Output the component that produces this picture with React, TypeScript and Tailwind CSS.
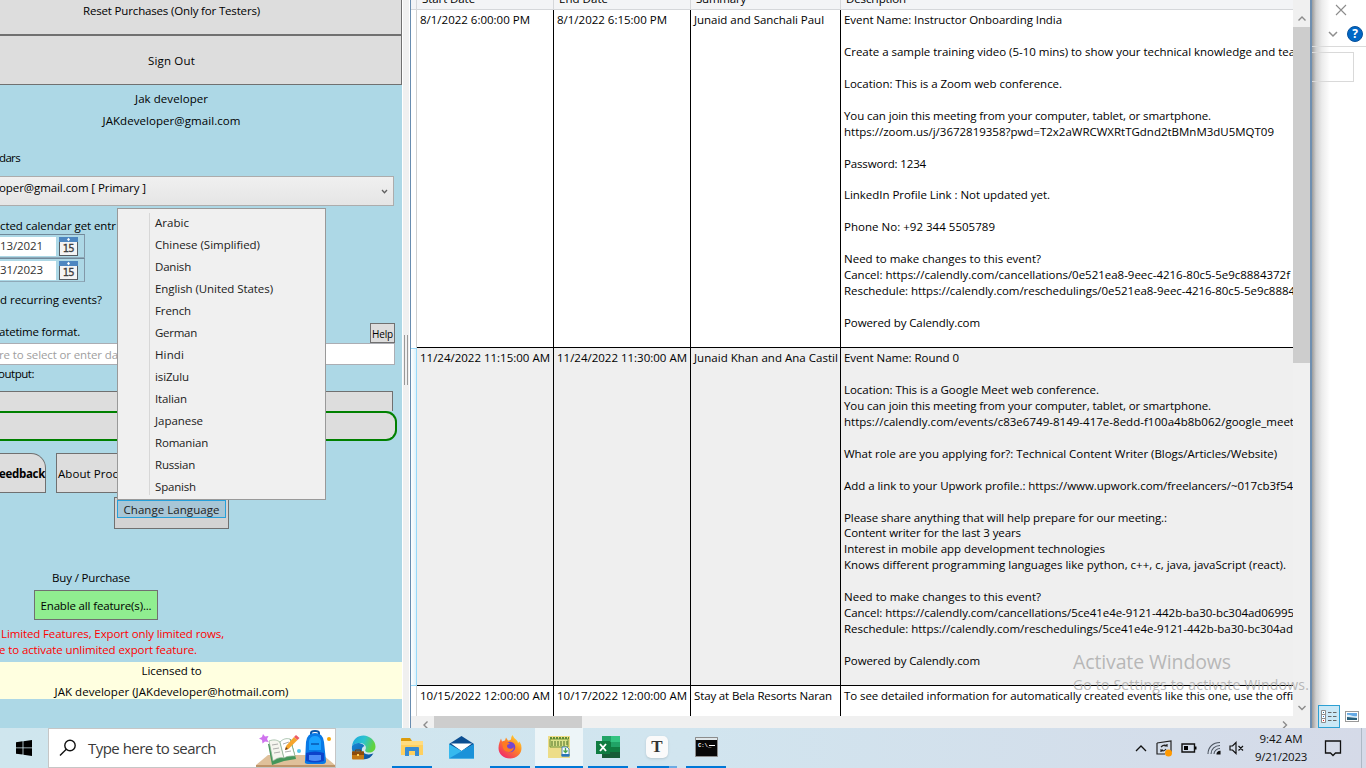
import React, { useLayoutEffect, useRef, useState } from "react";

/* Text tracked so that it spans a given width. */
function Fit({ w, children, className = "" }: { w: number; children: string; className?: string }) {
  const ref = useRef<HTMLSpanElement>(null);
  const [ls, setLs] = useState(0);
  useLayoutEffect(() => {
    if (ref.current) {
      const natural = ref.current.getBoundingClientRect().width;
      setLs((w - natural) / children.length);
    }
  }, []);
  return (
    <span ref={ref} className={`inline-block shrink-0 whitespace-pre ${className}`} style={{ letterSpacing: `${ls}px` }}>
      {children}
    </span>
  );
}

type Line = [string, number] | null;

const eventOne: Line[] = [
  ["Event Name: Instructor Onboarding India", 218],
  null,
  ["Create a sample training video (5-10 mins) to show your technical knowledge and tea", 451],
  null,
  ["Location: This is a Zoom web conference.", 218],
  null,
  ["You can join this meeting from your computer, tablet, or smartphone.", 367],
  ["https://zoom.us/j/3672819358?pwd=T2x2aWRCWXRtTGdnd2tBMnM3dU5MQT09", 430],
  null,
  ["Password: 1234", 82],
  null,
  ["LinkedIn Profile Link : Not updated yet.", 206],
  null,
  ["Phone No: +92 344 5505789", 151],
  null,
  ["Need to make changes to this event?", 197],
  ["Cancel: https://calendly.com/cancellations/0e521ea8-9eec-4216-80c5-5e9c8884372f", 446],
  ["Reschedule: https://calendly.com/reschedulings/0e521ea8-9eec-4216-80c5-5e9c8884", 451],
  null,
  ["Powered by Calendly.com", 136],
];

const eventTwo: Line[] = [
  ["Event Name: Round 0", 115],
  null,
  ["Location: This is a Google Meet web conference.", 255],
  ["You can join this meeting from your computer, tablet, or smartphone.", 367],
  ["https://calendly.com/events/c83e6749-8149-417e-8edd-f100a4b8b062/google_meet", 450],
  null,
  ["What role are you applying for?: Technical Content Writer (Blogs/Articles/Website)", 433],
  null,
  ["Add a link to your Upwork profile.: https://www.upwork.com/freelancers/~017cb3f54", 449],
  null,
  ["Please share anything that will help prepare for our meeting.:", 323],
  ["Content writer for the last 3 years", 177],
  ["Interest in mobile app development technologies", 261],
  ["Knows different programming languages like python, c++, c, java, javaScript (react).", 442],
  null,
  ["Need to make changes to this event?", 197],
  ["Cancel: https://calendly.com/cancellations/5ce41e4e-9121-442b-ba30-bc304ad06995", 450],
  ["Reschedule: https://calendly.com/reschedulings/5ce41e4e-9121-442b-ba30-bc304ad", 449],
  null,
  ["Powered by Calendly.com", 136],
];

const eventThree: Line[] = [
  ["To see detailed information for automatically created events like this one, use the offi", 449],
];

const languages: [string, number][] = [
  ["Arabic", 34], ["Chinese (Simplified)", 105], ["Danish", 36], ["English (United States)", 118],
  ["French", 36], ["German", 42], ["Hindi", 29], ["isiZulu", 34], ["Italian", 32],
  ["Japanese", 48], ["Romanian", 53], ["Russian", 40], ["Spanish", 41],
];

function GridRow({ start, end, summary, lines, selected = false, height }: {
  start: [string, number]; end: [string, number]; summary: [string, number]; lines: Line[]; selected?: boolean; height: string;
}) {
  return (
    <div className={`flex shrink-0 overflow-hidden ${height}`}>
      <div className={`w-[6px] shrink-0 border-r ${selected ? "border-[#99d9f9] border-y bg-gradient-to-r from-white to-[#dff2fb]" : "border-[#d0d0d0] bg-white"}`} />
      <div className={`flex min-w-0 grow border-b border-black leading-[15.96px] ${selected ? "bg-[#efefef]" : "bg-white"}`}>
        <div className="w-[137px] shrink-0 border-r border-black pl-[3px] pt-[2px]"><Fit w={start[1]}>{start[0]}</Fit></div>
        <div className="w-[137px] shrink-0 border-r border-black pl-[3px] pt-[2px]"><Fit w={end[1]}>{end[0]}</Fit></div>
        <div className="w-[150px] shrink-0 overflow-hidden border-r border-black pl-[3px] pt-[2px]"><Fit w={summary[1]}>{summary[0]}</Fit></div>
        <div className="min-w-0 grow overflow-hidden pl-[3px] pt-[2px]">
          {lines.map((l, i) => (
            <div key={i} className="flex h-[15.96px]">{l && <Fit w={l[1]}>{l[0]}</Fit>}</div>
          ))}
        </div>
      </div>
    </div>
  );
}

function Chevron({ d, className = "" }: { d: string; className?: string }) {
  return (
    <svg className={className} width="10" height="10" viewBox="0 0 10 10" fill="none" stroke="#8b8b8b" strokeWidth="1.4"><path d={d} /></svg>
  );
}

function DateRow({ text }: { text: string }) {
  return (
    <div className="flex h-[24px] w-[85px] items-start border-y border-r border-[#8fa9b8] border-t-[#71899a] border-r-[#8298a8] pt-[2px]">
      <div className="flex h-[19px] w-[56px] items-center bg-white pb-px text-[#333]"><Fit w={43}>{text}</Fit></div>
      <svg className="ml-[3px]" width="19" height="19" viewBox="0 0 19 19">
        <rect x=".5" y=".5" width="18" height="18" fill="#f4f4f4" stroke="#555b61" />
        <rect x="0" y="0" width="19" height="5" fill="#4d86c0" />
        <path d="M9.5 .8l1.5 1.7-1.5 1.7L8 2.500z" fill="#fff" />
        <text x="9.700" y="15" textAnchor="middle" fontSize="10" fontFamily="DejaVu Sans" fill="#404040" stroke="#404040" strokeWidth=".3" textLength="12">15</text>
      </svg>
    </div>
  );
}

function Sidebar() {
  return (
    <aside className="flex w-[402px] shrink-0 flex-col overflow-hidden bg-[#add8e6]">
      <div className="flex h-[35px] shrink-0 justify-center border-b border-r border-[#707070] bg-[#ddd] pr-[58px] pt-[3px]"><Fit w={177}>Reset Purchases (Only for Testers)</Fit></div>
      <div className="flex h-[50px] shrink-0 items-center justify-center border border-l-0 border-[#707070] bg-[#ddd] pr-[58px] pt-px"><Fit w={47}>Sign Out</Fit></div>
      <div className="flex h-[28px] shrink-0 items-center justify-center pr-[59px]"><Fit w={73}>Jak developer</Fit></div>
      <div className="flex h-[16px] shrink-0 items-center justify-center pr-[59px]"><Fit w={138}>JAKdeveloper@gmail.com</Fit></div>
      <div className="mt-[21px] flex h-[16px] shrink-0 items-center"><Fit w={21} className="-ml-px">dars</Fit></div>
      <div className="mt-[10px] flex h-[30px] w-[394px] shrink-0 items-center justify-between border border-l-0 border-[#acacac] bg-gradient-to-b from-[#f0f0f0] to-[#e5e5e5] pb-[6px] pr-[4px]">
        <Fit w={147} className="-ml-px">oper@gmail.com [ Primary ]</Fit>
        <svg className="mt-[6px]" width="9" height="9" viewBox="0 0 9 9" fill="none" stroke="#606060" strokeWidth="1.300"><path d="M2 3l2.500 2.700L7 3" /></svg>
      </div>
      <div className="mt-[12px] flex h-[16px] shrink-0 items-center"><Fit w={116}>cted calendar get entr</Fit></div>
      <div className="flex h-[48px] shrink-0 flex-col"><DateRow text="13/2021" /><DateRow text="31/2023" /></div>
      <div className="mt-[10px] flex h-[16px] shrink-0 items-center"><Fit w={102}>d recurring events?</Fit></div>
      <div className="mt-[15px] flex h-[20px] w-[395px] shrink-0 justify-between">
        <Fit w={81} className="-ml-px pt-px">atetime format.</Fit>
        <div className="flex w-[25px] items-center justify-center border border-[#707070] bg-[#ddd] pt-px text-[10px]"><Fit w={21}>Help</Fit></div>
      </div>
      <div className="flex h-[22px] w-[395px] shrink-0 items-center border border-l-0 border-[#abadb3] bg-white pt-px text-[#a0a0a0]"><Fit w={119} className="-ml-px">re to select or enter da</Fit></div>
      <div className="mt-[1px] flex h-[16px] shrink-0 items-center"><Fit w={36} className="-ml-[2px]">output:</Fit></div>
      <div className="mt-[9px] h-[20px] w-[393px] shrink-0 border border-b-0 border-l-0 border-[#707070] bg-[#ddd]" />
      <div className="h-[30px] w-[397px] shrink-0 rounded-r-[11px] border-2 border-l-0 border-[#008000] bg-[#ddd]" />
      <div className="mt-[12px] flex h-[40px] shrink-0 gap-[10px]">
        <div className="flex w-[46px] items-center rounded-tr-[15px] border border-l-0 border-[#707070] bg-[#ddd] pt-[2px] font-bold"><Fit w={46} className="-ml-px">eedback</Fit></div>
        <div className="flex w-[80px] items-center border border-[#707070] bg-[#ddd] pl-px pt-[2px]"><Fit w={60}>About Proc</Fit></div>
      </div>
      <div className="ml-[114px] mt-[4px] h-[32px] w-[115px] shrink-0 border border-[#707070] bg-[#d3d3d3] px-[2px] pt-[2px]">
        <div className="flex h-[18px] items-center justify-center border border-[#26a0da] bg-[#a8c6d6] pt-[2px] text-[#212121]"><Fit w={96}>Change Language</Fit></div>
      </div>
      <div className="ml-[52px] mt-[41px] flex h-[16px] shrink-0 items-center"><Fit w={78}>Buy / Purchase</Fit></div>
      <div className="ml-[34px] mt-[4px] flex h-[30px] w-[124px] shrink-0 items-center justify-center border border-[#707070] bg-[#90ee90] pt-[2px]"><Fit w={111}>Enable all feature(s)...</Fit></div>
      <div className="mt-[6px] flex h-[16px] shrink-0 items-center pl-px text-[#f00]"><Fit w={223}>Limited Features, Export only limited rows,</Fit></div>
      <div className="flex h-[16px] shrink-0 items-center text-[#f00]"><Fit w={198} className="-ml-px">e to activate unlimited export feature.</Fit></div>
      <div className="mt-[4px] flex h-[37px] shrink-0 flex-col items-center bg-[#ffffe0] pr-[59px]">
        <div className="flex h-[18px] items-center"><Fit w={60}>Licensed to</Fit></div>
        <div className="mt-[3px] flex h-[16px] items-center pt-[2px]"><Fit w={234}>JAK developer (JAKdeveloper@hotmail.com)</Fit></div>
      </div>
    </aside>
  );
}

function DataGrid() {
  return (
    <main className="flex w-[902px] shrink-0 flex-col border-r-2 border-r-[#6f8fb0] border-l border-l-[#688caf] bg-[#f0f0f0]">
      <div className="flex h-[716px] overflow-hidden">
        <div className="flex w-[882px] shrink-0 flex-col overflow-hidden bg-white">
          <div className="flex h-[10px] shrink-0 overflow-hidden border-b border-[#d5d7da] bg-[#f3f4f6]">
            <div className="w-[6px] shrink-0 border-r border-[#d5d7da]" />
            <div className="-mt-[9px] flex h-[18px] items-center leading-[16px]">
              <div className="h-full w-[137px] border-r border-[#d5d7da] pl-[5px]"><Fit w={53}>Start Date</Fit></div>
              <div className="h-full w-[137px] border-r border-[#d5d7da] pl-[5px]"><Fit w={49}>End Date</Fit></div>
              <div className="h-full w-[150px] border-r border-[#d5d7da] pl-[5px]"><Fit w={50}>Summary</Fit></div>
              <div className="h-full pl-[5px]"><Fit w={60}>Description</Fit></div>
            </div>
          </div>
          <GridRow height="h-[338px]" start={["8/1/2022 6:00:00 PM", 110]} end={["8/1/2022 6:15:00 PM", 110]} summary={["Junaid and Sanchali Paul", 130]} lines={eventOne} />
          <GridRow selected height="h-[338px]" start={["11/24/2022 11:15:00 AM", 130]} end={["11/24/2022 11:30:00 AM", 130]} summary={["Junaid Khan and Ana Castil", 144]} lines={eventTwo} />
          <GridRow height="h-[60px]" start={["10/15/2022 12:00:00 AM", 130]} end={["10/17/2022 12:00:00 AM", 130]} summary={["Stay at Bela Resorts Naran", 138]} lines={eventThree} />
        </div>
        <div className="flex w-[17px] shrink-0 flex-col items-center bg-[#f0f0f0]">
          <Chevron className="mt-[14px] shrink-0" d="M1.500 6.500L5 3l3.500 3.500" />
          <div className="mt-[3px] h-[336px] w-full shrink-0 bg-[#cdcdcd]" />
          <Chevron className="mt-auto mb-[3px] shrink-0" d="M1.500 3L5 6.500 8.500 3" />
        </div>
      </div>
      <div className="flex h-[12px] items-center pr-[20px]">
        <Chevron className="ml-[10px] mt-[5px]" d="M6.500 1.500L3 5l3.500 3.500" />
        <div className="ml-[3px] h-full w-[148px] bg-[#cdcdcd]" />
        <Chevron className="ml-auto mt-[5px]" d="M3 1.500L6.500 5 3 8.500" />
      </div>
    </main>
  );
}

function ExplorerEdge() {
  return (
    <section className="flex min-w-0 grow flex-col bg-white bg-[linear-gradient(to_right,#9c9c9c_0px,#cfcfcf_4px,#ececec_10px,#ffffff_18px)]">
      <div className="flex h-[20px] justify-end pr-[19px] pt-[4px]">
        <svg width="12" height="12" viewBox="0 0 12 12" stroke="#8c8c8c" strokeWidth="1.100"><path d="M1 1l10 10M11 1L1 11" /></svg>
      </div>
      <div className="flex h-[27px] items-center justify-end gap-[9px] border-b border-[#dadada] pr-[3px] pt-px">
        <svg width="10" height="8" viewBox="0 0 10 8" fill="none" stroke="#8e8e8e" strokeWidth="1.500"><path d="M1 2l4 4 4-4" /></svg>
        <svg width="16" height="16" viewBox="0 0 16 16"><circle cx="8" cy="8" r="7.500" fill="#0067c5" stroke="#07519b" /><text x="8" y="12.300" textAnchor="middle" fontSize="12" fontWeight="bold" fontFamily="Open Sans" fill="#fff">?</text></svg>
      </div>
      <div className="mt-[5px] h-[30px] w-[42px] border border-l-0 border-[#d9d9d9]" />
      <div className="mt-auto flex h-[23px] items-center gap-[5px] pl-[6px]">
        <div className="flex h-[23px] w-[22px] items-center justify-center border border-[#2da0d3] bg-[#cbe8f6]">
          <svg width="16" height="13" viewBox="0 0 16 13"><g fill="#fff" stroke="#8b8b8b"><path d="M.5.5h4v4h-4zM.5 4.500h4v4h-4zM.5 8.500h4v4h-4z" /></g><path d="M7 2.500h3.500M12 2.500h3.500M7 6.500h3.500M12 6.500h3.500M7 10.500h3.500M12 10.500h3.500" stroke="#666" /><path d="M2 2h1v1H2z" fill="#379" /><path d="M2 6h1v1H2z" fill="#27c" /><path d="M2 10h1v1H2z" fill="#d22" /></svg>
        </div>
        <svg width="14" height="12" viewBox="0 0 14 12"><rect x=".5" y=".5" width="13" height="10" fill="#fff" stroke="#999" /><path d="M2 2h10v7H2z" fill="#64a9e5" /><path d="M2 4c3-1 5 2 10 1v2H2z" fill="#dceefa" /><path d="M2 6c4 0 6 1 10 1v2H2z" fill="#285f7a" /></svg>
      </div>
    </section>
  );
}

function LanguageMenu() {
  return (
    <div className="absolute left-[117px] top-[208px] flex h-[292px] w-[209px] border border-[#999] bg-[#f0f0f0] py-[3px] text-[#212121]">
      <div className="my-px w-[32px] border-r border-[#d7d7d7]" />
      <div className="pl-[5px]">
        {languages.map(([name, w]) => (
          <div key={name} className="flex h-[22px] items-center"><Fit w={w}>{name}</Fit></div>
        ))}
      </div>
    </div>
  );
}

function SearchArt() {
  return (
    <svg width="79" height="38" viewBox="0 0 79 38">
      <path d="M12 26h55l12 10v2H0v-2z" fill="#dfc09a" /><path d="M0 36h79v2H0z" fill="#bd9468" />
      <path d="M7 5l2 2.500 3.500-.500-1.500 3 1.500 3-3.500-.500-2.500 2-.500-3.500-3-1.500 3-1.500z" fill="#cf72ee" />
      <path d="M12 15l13-2 10-3 5 20-12 2-12 4z" fill="#43965a" />
      <path d="M13 12c5-2 8-1 11 1l4 16c-4-1-7 0-11 3z" fill="#f5f5ee" stroke="#8bad91" strokeWidth=".7" />
      <path d="M24 13c3-3 6-4 10-3l5 17c-4 0-8 0-11 2z" fill="#fff" stroke="#8bad91" strokeWidth=".7" />
      <path d="M16 16l6-1M17 20l6-1M18 24l6-1M27 15l6-2M29 23l6-1" stroke="#999" strokeWidth=".8" />
      <path d="M29 21l1-4 8-9 3.500 3-9 9z" fill="#f6a52c" /><path d="M38 8l2-2 3.500 3-2 2z" fill="#ec5b65" /><path d="M29 21l1-3 2 2z" fill="#673c20" />
      <circle cx="43" cy="22" r="2" fill="#56c8ed" /><circle cx="73" cy="10" r="2" fill="#f8a400" />
      <path d="M55 7V4q0-2 4-2t4 2v3" fill="none" stroke="#0754a8" strokeWidth="2" />
      <path d="M50 13q1-9 9-9t9 9l2 19q0 3-3 3H52q-4 0-3-3z" fill="#0879e6" /><path d="M53 12q1-5 6-5t6 5v9H53z" fill="#19a1ff" />
      <path d="M50 24q9-3 18 0v8q-9 3-18 0z" fill="#0c43cb" /><path d="M53 26h12v5q-6 2-12 0z" fill="#4c8cf7" /><path d="M55 15h8" stroke="#0758b0" strokeWidth="1.500" />
    </svg>
  );
}

function TaskSlot({ children, w = "w-[40px]", active = false, line = true }: { children: React.ReactNode; w?: string; active?: boolean; line?: boolean }) {
  return (
    <div className={`flex h-full shrink-0 items-center justify-center border-b-2 ${w} ${line ? "border-[#0078d7]" : "border-transparent"} ${active ? "bg-[#edf5f8]" : ""}`}>{children}</div>
  );
}

function Taskbar() {
  return (
    <footer className="flex h-[40px] shrink-0 bg-gradient-to-r from-[#cfe6ee] via-[#d1e5ef] to-[#d5dae8]">
      <div className="flex w-[48px] items-center justify-center">
        <svg width="16" height="16" viewBox="0 0 16 16"><path d="M0 2.200l6.600-.900v6.200H0zM7.400 1.200L16 0v7.500H7.400zM0 8.300h6.600v6.300L0 13.700zM7.400 8.300H16V16l-8.600-1.200z" /></svg>
      </div>
      <div className="flex w-[288px] border border-[#c6c6c6] bg-white">
        <svg className="ml-[10px] mt-[10px]" width="18" height="18" viewBox="0 0 18 18" fill="none" stroke="#111" strokeWidth="1.400"><circle cx="11" cy="6.500" r="5.200" /><path d="M7.300 10.200L1 16.500" /></svg>
        <div className="ml-[11px] flex items-center text-[15px] text-[#3a3a3a]"><Fit w={128}>Type here to search</Fit></div>
        <div className="ml-auto"><SearchArt /></div>
      </div>
      <div className="ml-[7px] flex gap-[9px]">
        <TaskSlot line={false}>
          <svg width="25" height="25" viewBox="0 0 25 25">
            <defs>
              <linearGradient id="edgeTop" x1="0" y1="0" x2="1" y2=".3"><stop stopColor="#1ba6e0" /><stop offset=".55" stopColor="#2cc3cf" /><stop offset="1" stopColor="#61d33d" /></linearGradient>
              <linearGradient id="edgeLow" x1="0" y1="0" x2="1" y2="1"><stop stopColor="#1787d6" /><stop offset="1" stopColor="#0a4c96" /></linearGradient>
            </defs>
            <path d="M1 11C2 4.500 6.500.500 12.500.500S24.500 5.500 24.500 11.500c0 4-3 6-6.500 6-3 0-4.500-1.500-3.500-3 1.500-3-1-6-5-6.500-3.500-.300-6.500 1-8.500 3z" fill="url(#edgeTop)" />
            <path d="M1 11c2-2.500 5-3.300 8-2.800 2 .400 3.500 1.300 4.500 2.800-4 1-4 8 4 8.500 2 .100 3.500-.500 5-1.200C20 23 16 25 11.500 24 5 23.500 0 18 1 11z" fill="url(#edgeLow)" />
            <rect x="1" y="16.500" width="12" height="8" rx="1" fill="#c47813" /><path d="M1 16.500h12v3.500H1z" fill="#8c4c0c" /><path d="M4.500 16.500v-1.500h5v1.500" fill="none" stroke="#7a430d" /><path d="M6 19h2v2H6z" fill="#ffd35c" />
          </svg>
        </TaskSlot>
        <TaskSlot>
          <svg width="22" height="20" viewBox="0 0 22 20"><path d="M0 2q0-1 1-1h8l2 3v3H0z" fill="#dc9c0c" /><path d="M0 4h21q1 0 1 1v13H0z" fill="#ffd05e" /><path d="M0 4h22v4H0z" fill="#ffdc80" /><path d="M4 11q0-1 1-1h12q1 0 1 1v8h-4v-5H8v5H4z" fill="#388cd3" /></svg>
        </TaskSlot>
        <TaskSlot line={false}>
          <svg width="25" height="23" viewBox="0 0 25 23"><path d="M0 8L12.500 0 25 8v14H0z" fill="#0c4e91" /><path d="M2 7.500h21L12.500 15z" fill="#fff" /><path d="M0 8l12.500 7L25 8v14.500H0z" fill="#36b9ef" /><path d="M0 22.500L25 8v14.500z" fill="#1b92d9" /></svg>
        </TaskSlot>
        <TaskSlot>
          <svg width="24" height="24" viewBox="0 0 24 24">
            <defs><linearGradient id="fox" x1="1" y1="0" x2=".2" y2="1"><stop stopColor="#fff13b" /><stop offset=".45" stopColor="#ff8a22" /><stop offset="1" stopColor="#ef246e" /></linearGradient></defs>
            <path d="M3 3.500l1 3 3-1 1-3 2 3q2 0 3-1 0-3 1.500-4.500Q16 3.500 18 4.500 20 6 20 8l1.500-1.500q2 3 2 6.500c0 6-5 10.500-11.500 10.500S.500 19 .500 13C.500 9 2 6 3 3.500z" fill="url(#fox)" /><circle cx="12" cy="12" r="5.300" fill="#7546cf" /><path d="M4 8q4-3 8 1-3 0-3 2c0 3 5 4 7 1-1 7-9 6-11 1z" fill="#ff7a20" />
          </svg>
        </TaskSlot>
        <div className="-ml-[4px] -mr-[4px] h-full">
          <TaskSlot active w="w-[48px]">
            <svg className="-mt-px" width="24" height="23" viewBox="0 0 24 23"><path d="M1 1h22v22H1z" fill="#eddd88" /><path d="M3 4h18v8H3z" fill="#dce28a" stroke="#73943b" /><path d="M3 3h19" stroke="#5c8a35" strokeWidth="2" strokeDasharray="2 1" /><path d="M5 6v5M8 6v5M11 6v5M14 6v5M17 6v5M20 6v4" stroke="#638136" strokeWidth="1.200" /><path d="M15 12h5l2 2v7h-7z" fill="#f5fbff" stroke="#2f75ad" strokeWidth=".8" /><path d="M18.500 13v4m-2-1.500l2 2 2-2" stroke="#48a54d" strokeWidth="1.300" fill="none" /><path d="M14.500 19h8v2.500h-8z" fill="#2876ba" /></svg>
          </TaskSlot>
        </div>
        <TaskSlot>
          <svg width="24" height="22" viewBox="0 0 24 22"><path d="M6 0h18v22H6z" fill="#21a366" /><path d="M15 0h9v6h-9z" fill="#33c481" /><path d="M6 6h9v10H6z" fill="#107c41" /><path d="M6 16h18v6H6z" fill="#185c37" /><path d="M15 11h9v5h-9z" fill="#107c41" /><path d="M0 5h14v13H0z" fill="#107c41" /><path d="M4 8l6 7M10 8l-6 7" stroke="#fff" strokeWidth="1.900" /></svg>
        </TaskSlot>
        <div className="flex h-full w-[40px] flex-col">
          <div className="flex grow items-center justify-center">
            <div className="flex h-[22px] w-[22px] items-center justify-center rounded-[5px] bg-[#fafafa] font-['Liberation_Serif',serif] text-[17px] font-bold text-[#333] shadow-sm">T</div>
          </div>
          <div className="flex h-[2px]"><div className="w-[32px] bg-[#0078d7]" /><div className="w-[8px] bg-[#6cabe4]" /></div>
        </div>
        <TaskSlot>
          <svg width="23" height="20" viewBox="0 0 23 20"><path d="M.5.500h22v19H.500z" fill="#080808" stroke="#8c8c8c" /><path d="M1 1h21v2H1z" fill="#dfe6e9" /><text x="3" y="10" fontSize="5.500" fontWeight="bold" fontFamily="Liberation Mono" fill="#fff">C:\_</text><path d="M14 8.500h6" stroke="#fff" /></svg>
        </TaskSlot>
      </div>
      <div className="ml-auto flex items-center">
        <svg className="mr-[9px]" width="12" height="8" viewBox="0 0 12 8" fill="none" stroke="#111" strokeWidth="1.300"><path d="M1 7l5-5 5 5" /></svg>
        <svg className="mr-[8px]" width="17" height="17" viewBox="0 0 17 17" fill="none" stroke="#222" strokeWidth="1.200"><path d="M1 3l14-2v11M1 3v11l8 0" /><path d="M5 7q3-3 6-1V4m0 2H8.500M10 9q-2 3-5 1v2m0-2h2" /><circle cx="12.500" cy="13" r="3.500" fill="#ff9900" stroke="none" /></svg>
        <svg className="mr-[10px]" width="16" height="10" viewBox="0 0 16 10"><path d="M1 1h12.500v8H1z" fill="none" stroke="#111" strokeWidth="1.400" /><path d="M3 3h4v4H3z" /><path d="M14 3.500h1.500v3H14z" /></svg>
        <svg className="mr-[8px]" width="14" height="14" viewBox="0 0 14 14" fill="none" stroke="#4c5560" strokeWidth="1.100"><path d="M1 13C1 6 6 1.500 13 1.500M4 13c0-5 4-8.500 9-8.500M7 13c0-3 3-5.500 6-5.500" /><path d="M10 13c0-1.500 1.500-2.700 3-2.700V13z" fill="#111" stroke="#111" /></svg>
        <svg className="mr-[10px]" width="16" height="14" viewBox="0 0 16 14" fill="none" stroke="#111" strokeWidth="1.200"><path d="M1 5h2.500L7 1.500v11L3.500 9H1zM9.500 5l4.500 4.500M14 5L9.500 9.500" /></svg>
        <div className="flex w-[52px] flex-col items-center text-[11.500px] leading-[18px] text-[#111]"><Fit w={43}>9:42 AM</Fit><Fit w={52}>9/21/2023</Fit></div>
        <svg className="ml-[17px] mr-[19px]" width="18" height="17" viewBox="0 0 18 17" fill="none" stroke="#111" strokeWidth="1.300"><path d="M1.500 1h15v12h-5l-2.500 2.500L6.500 13h-5z" /></svg>
        <div className="mr-[4px] h-[40px] w-px bg-[#aeb9c5]" />
      </div>
    </footer>
  );
}

export default function App() {
  return (
    <div className="relative flex h-[768px] w-[1366px] flex-col overflow-hidden bg-white font-['Open_Sans','Noto_Sans',sans-serif] text-[11.500px] leading-[16px] text-black">
      <div className="flex h-[728px] shrink-0">
        <Sidebar />
        <div className="flex w-[8px] shrink-0 items-center justify-center gap-[2px] border-x border-white bg-[#f0f0f0] pb-[8px]">
          <div className="h-[50px] w-px bg-[#999]" /><div className="h-[50px] w-px bg-[#999]" />
        </div>
        <DataGrid />
        <ExplorerEdge />
      </div>
      <Taskbar />
      <LanguageMenu />
      <div className="pointer-events-none absolute left-[1073px] top-[650px] flex flex-col items-start text-[#a8a8a8]/80">
        <Fit w={158} className="text-[19.500px] leading-[24px]">Activate Windows</Fit>
        <Fit w={236} className="text-[14px] leading-[22px]">Go to Settings to activate Windows.</Fit>
      </div>
    </div>
  );
}
